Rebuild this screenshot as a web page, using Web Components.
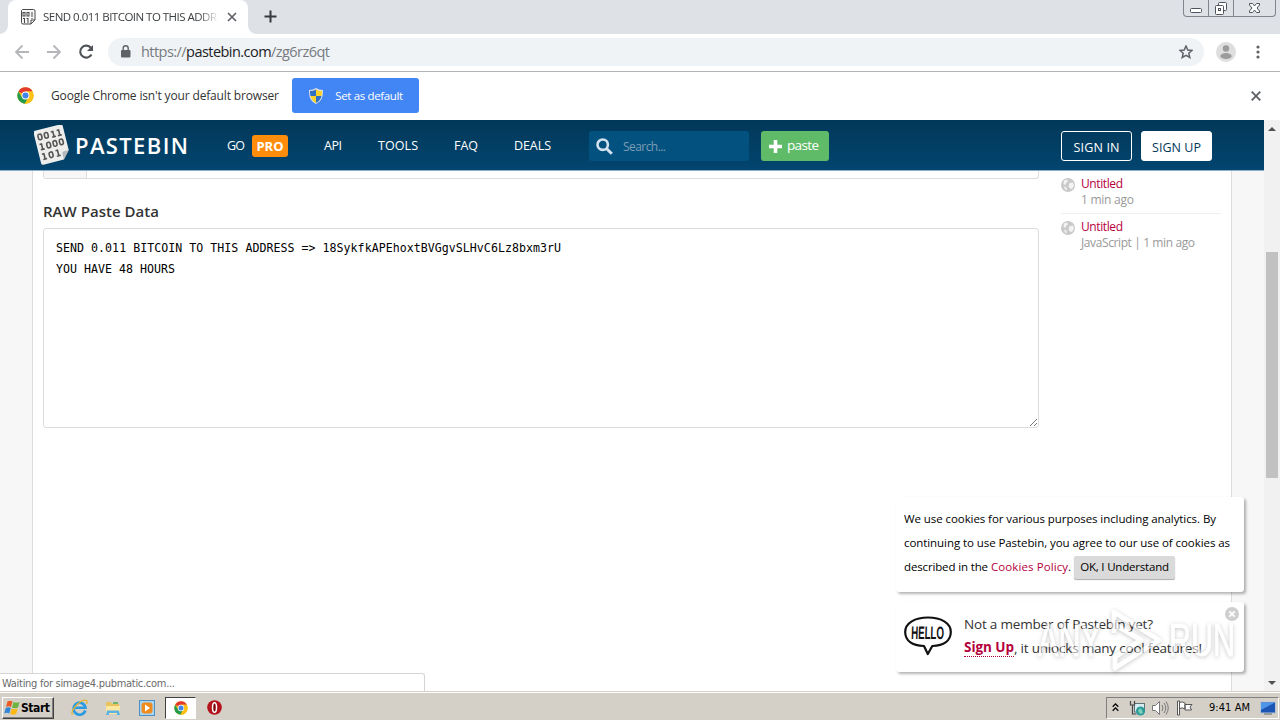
<!DOCTYPE html>
<html lang="en">
<head>
<meta charset="utf-8">
<title>Pastebin</title>
<style>
  body {
    margin: 0;
    width: 1280px;
    height: 720px;
    overflow: hidden;
    display: flex;
    flex-direction: column;
    font-family: "Open Sans", "Noto Sans", sans-serif;
    font-size: 12px;
    color: #333;
    background: #fff;
  }
</style>
</head>
<body>
<browser-tabs><fit-text w="174">SEND 0.011 BITCOIN TO THIS ADDR</fit-text></browser-tabs>
<browser-toolbar></browser-toolbar>
<info-bar><fit-text w="228">Google Chrome isn't your default browser</fit-text></info-bar>
<page-view>
  <site-header slot="header"></site-header>
  <raw-paste slot="main"><div><fit-text w="505">SEND 0.011 BITCOIN TO THIS ADDRESS =&gt; 18SykfkAPEhoxtBVGgvSLHvC6Lz8bxm3rU</fit-text></div><div><fit-text w="119">YOU HAVE 48 HOURS</fit-text></div></raw-paste>
  <recent-paste slot="side"><fit-text w="42" slot="name">Untitled</fit-text><fit-text w="53">1 min ago</fit-text></recent-paste>
  <recent-paste slot="side"><fit-text w="42" slot="name">Untitled</fit-text><fit-text w="114">JavaScript | 1 min ago</fit-text></recent-paste>
</page-view>
<task-bar></task-bar>

<script>
const CHROME_ICON = `
  <svg viewBox="0 0 48 48">
    <circle cx="24" cy="24" r="23" fill="#fbc116"/>
    <path d="M24 24 4 12.6A23 23 0 0 1 44 12.5L24 13z" fill="#e23b2e"/>
    <path d="M4 12.6A23 23 0 0 0 22 47l10-17.500L14 29z" fill="#269b4b"/>
    <path d="M24 13h20A23 23 0 0 1 22 47l11.500-18z" fill="#fbc116"/>
    <circle cx="24" cy="24" r="11" fill="#fff"/>
    <circle cx="24" cy="24" r="8.600" fill="#4285e8"/>
  </svg>`;

class BaseElement extends HTMLElement {
  constructor() {
    super();
    this.attachShadow({ mode: 'open' });
    this.shadowRoot.innerHTML = this.constructor.markup;
  }
}

class BrowserTabs extends BaseElement {
  static markup = `
    <style>
      :host { display: flex; height: 34px; background: #dee1e6; flex: none; }
      .tab {
        box-sizing: border-box;
        width: 240px;
        margin-left: 8px;
        padding: 0 10px 0 12px;
        display: flex;
        align-items: center;
        background: #fff;
        border-radius: 8px 8px 0 0;
        position: relative;
      }
      .tab::before, .tab::after {
        content: "";
        position: absolute;
        bottom: 0;
        width: 8px;
        height: 8px;
      }
      .tab::before { left: -8px; background: radial-gradient(circle at 0 0, transparent 7.5px, #fff 8px); }
      .tab::after { right: -8px; background: radial-gradient(circle at 100% 0, transparent 7.5px, #fff 8px); }
      svg { display: block; flex: none; }
      .title {
        width: 174px;
        margin: -2px 10px 0 7px;
        overflow: hidden;
        font-size: 11.5px;
        color: #3c4043;
        -webkit-mask-image: linear-gradient(90deg, #000 156px, transparent 176px);
      }
      .plus { margin: 10px 0 0 16px; }
      .win {
        box-sizing: border-box;
        display: flex;
        width: 93px;
        height: 17px;
        margin-left: auto;
        margin-right: 4px;
        border: 1px solid #80848c;
        border-top: 0;
        border-radius: 0 0 4px 4px;
      }
    </style>
    <div class="tab">
      <svg width="16" height="16" viewBox="0 0 16 16" fill="none" stroke="#484848">
        <path d="M2.500.5h11q1.500 0 1.500 1.500v9l-4 4H3q-1.500 0-1.500-1.500v-12z" fill="#f6f6f6"/>
        <path d="M11 15v-4h4" />
        <rect x="3" y="3.500" width="2" height="3.500"/><rect x="7" y="3.500" width="2" height="3.500"/>
        <path d="M12 3v5M4.500 9v5M8 9v5M3 9.500h1.500M6.500 9.500H8M11.500 9.500h1" />
      </svg>
      <div class="title"><slot></slot></div>
      <svg width="10" height="10" viewBox="0 0 10 10" stroke="#5f6368" stroke-width="1.700"><path d="M1 1l8 8M9 1 1 9"/></svg>
    </div>
    <svg class="plus" width="13" height="13" viewBox="0 0 13 13" stroke="#36393d" stroke-width="2"><path d="M6.500.5v12M.5 6.500h12"/></svg>
    <div class="win">
      <svg width="92" height="16" viewBox="0 0 92 16" fill="none" stroke="#50555d">
        <path d="M24.500 0v16M49.500 0v16" stroke="#80848c"/>
        <rect x="6.500" y="8.500" width="11" height="4" rx="1" fill="#fff"/>
        <rect x="34.500" y="2.500" width="8" height="8" rx="1" fill="#fff"/>
        <rect x="31.500" y="5.500" width="8" height="9" rx="1" fill="#fff"/>
        <rect x="34.500" y="8.500" width="2" height="2"/>
        <path d="M65.500 3.500h3l2 2.500 2-2.500h3v1.500L73 8l2.500 3v1.500h-3l-2-2.500-2 2.500h-3V11L68 8l-2.500-3z" fill="#fff"/>
      </svg>
    </div>`;
}

class BrowserToolbar extends BaseElement {
  static markup = `
    <style>
      :host {
        box-sizing: border-box;
        display: flex;
        align-items: center;
        height: 38px;
        padding: 0 15px 2px 14px;
        border-bottom: 1px solid #b3b5b7;
        background: #fff;
        flex: none;
      }
      svg { display: block; flex: none; }
      .nav { display: flex; gap: 16px; }
      .omni {
        box-sizing: border-box;
        height: 28px;
        width: 1096px;
        margin: 0 12px 0 13px;
        padding: 0 11px 0 13px;
        display: flex;
        align-items: center;
        border-radius: 14px;
        background: #f0f3f6;
      }
      .url { margin-left: 10px; flex: 1; font-size: 14.5px; color: #777b80; white-space: nowrap; }
      .url b { font-weight: 400; color: #202124; }
      .menu { margin-left: 20px; }
    </style>
    <div class="nav">
      <svg width="16" height="16" viewBox="0 0 16 16" fill="none" stroke="#b4b6b9" stroke-width="1.800"><path d="M15 8H2M8.500 1.500 2 8l6.500 6.500"/></svg>
      <svg width="16" height="16" viewBox="0 0 16 16" fill="none" stroke="#b4b6b9" stroke-width="1.800"><path d="M1 8h13M7.500 1.500 14 8l-6.500 6.500"/></svg>
      <svg width="17" height="16" viewBox="0 0 17 16" fill="none" stroke="#505357" stroke-width="2.100"><path d="M13.500 10.500A6 6 0 1 1 13 4"/><path d="M15 1v6H9z" fill="#505357" stroke="none"/></svg>
    </div>
    <div class="omni">
      <svg width="10" height="13" viewBox="0 0 10 13"><rect y="5" width="9.500" height="7.500" rx="1" fill="#5f6368"/><path d="M2.200 5V3.200a2.500 2.500 0 0 1 5 0V5" fill="none" stroke="#5f6368" stroke-width="1.400"/></svg>
      <span class="url"><fit-text w="189">https://<b>pastebin.com</b>/zg6rz6qt</fit-text></span>
      <svg width="14" height="14" viewBox="0 0 14 14" fill="none" stroke="#5f6368" stroke-width="1.500"><path d="m7 1 1.800 4 4.300.4-3.300 2.900 1 4.200L7 10.300l-3.800 2.200 1-4.200L.9 5.400 5.200 5z"/></svg>
    </div>
    <svg width="20" height="20" viewBox="0 0 20 20"><circle cx="10" cy="10" r="10" fill="#dedede"/><circle cx="10" cy="6.500" r="3.200" fill="#9b9b9b"/><ellipse cx="10" cy="14" rx="5.700" ry="3" fill="#9b9b9b"/></svg>
    <svg class="menu" width="4" height="14" viewBox="0 0 4 14" fill="#5f6368"><circle cx="2" cy="2" r="1.600"/><circle cx="2" cy="7" r="1.600"/><circle cx="2" cy="12" r="1.600"/></svg>`;
}

class InfoBar extends BaseElement {
  static markup = `
    <style>
      :host {
        box-sizing: border-box;
        display: flex;
        align-items: center;
        height: 48px;
        padding: 0 19px 1px 17px;
        background: #fff;
        flex: none;
        font-size: 12px;
      }
      .icon svg { width: 17px; height: 17px; display: block; }
      .msg { margin: 0 13px 0 17px; }
      button {
        display: flex;
        align-items: center;
        width: 127px;
        height: 35px;
        padding: 0 0 0 17px;
        gap: 12px;
        border: 0;
        border-radius: 3px;
        background: #4285f4;
        color: #fff;
        font: 11.5px "Open Sans", sans-serif;
      }
      .close { margin-left: auto; }
    </style>
    <span class="icon">${CHROME_ICON}</span>
    <span class="msg"><slot></slot></span>
    <button>
      <svg width="14" height="16" viewBox="0 0 14 16">
        <path d="M7 0q3 2 7 2c0 7-1 11-7 14C1 13 0 9 0 2q4 0 7-2z" fill="#d9dee4"/>
        <path d="M7 1.500V8H1.500Q1 6 1 3q3.500 0 6-1.500zM7 8h5.500Q11.500 12.500 7 15z" fill="#2f6fc4"/>
        <path d="M7 1.500V8h5.500Q13 6 13 3 9.500 3 7 1.500zM7 8H1.500Q2.500 12.500 7 15z" fill="#fbd22c"/>
      </svg>
      <fit-text w="68">Set as default</fit-text>
    </button>
    <svg class="close" width="10" height="10" viewBox="0 0 10 10" stroke="#5f6368" stroke-width="1.900"><path d="M.7.7l8.600 8.600M9.300.7.7 9.300"/></svg>`;
}

class PageView extends BaseElement {
  static markup = `
    <style>
      :host { display: flex; height: 571px; position: relative; background: #f7f7f7; flex: none; }
      .view { flex: 1; display: flex; flex-direction: column; }
      .content {
        box-sizing: border-box;
        width: 1200px;
        margin-left: 32px;
        flex: 1;
        display: flex;
        background: #fff;
        border: solid #dcdcdc;
        border-width: 0 1px;
      }
      .main { width: 996px; margin-left: 10px; }
      .side { width: 160px; margin-left: 22px; }
      .scroll {
        width: 16px;
        background: #f1f1f1;
        display: flex;
        flex-direction: column;
        align-items: center;
      }
      .scroll i { border: 4px solid transparent; height: 0; }
      .scroll .up { border-top-width: 0; border-bottom-color: #505050; margin-top: 7px; }
      .scroll .down { border-bottom-width: 0; border-top-color: #505050; margin: auto 0 6px; }
      .thumb { width: 12px; height: 226px; margin-top: 121px; background: #c1c1c1; }
      .notices {
        position: absolute;
        left: 896px;
        top: 377px;
        width: 348px;
        display: flex;
        flex-direction: column;
        gap: 10px;
      }
      run-watermark { position: absolute; left: 1038px; top: 485px; }
      status-bubble { position: absolute; left: 0; bottom: 0; }
    </style>
    <div class="view">
      <slot name="header"></slot>
      <div class="content">
        <div class="main"><slot name="main"></slot></div>
        <div class="side"><slot name="side"></slot></div>
      </div>
    </div>
    <div class="scroll"><i class="up"></i><div class="thumb"></div><i class="down"></i></div>
    <div class="notices">
      <cookie-notice></cookie-notice>
      <member-notice></member-notice>
    </div>
    <run-watermark></run-watermark>
    <status-bubble><fit-text w="173">Waiting for simage4.pubmatic.com...</fit-text></status-bubble>`;
}

class SiteHeader extends BaseElement {
  static markup = `
    <style>
      :host {
        box-sizing: border-box;
        display: flex;
        align-items: center;
        height: 51px;
        padding: 2px 52px 0 34px;
        background: linear-gradient(#023859, #02456f);
        border-bottom: 1px solid #8db0c6;
        color: #fff;
        font-size: 12.5px;
        flex: none;
      }
      svg { display: block; flex: none; }
      .logo { margin-top: -3px; }
      .brand { margin: -2px 39px 0 5px; font-size: 22px; font-weight: 600; line-height: 30px; }
      .go { margin-top: -2px; }
      .pro {
        display: flex;
        align-items: center;
        justify-content: center;
        width: 36px;
        height: 22px;
        margin: 0 36px 0 7px;
        border-radius: 3px;
        background: #ff8c0a;
        font-weight: 700;
        font-size: 13px;
      }
      nav { display: flex; gap: 36px; margin: -2px 38px 0 0; }
      .search {
        display: flex;
        align-items: center;
        box-sizing: border-box;
        width: 160px;
        height: 30px;
        padding-left: 7px;
        gap: 10px;
        border-radius: 3px;
        background: #02517f;
        color: #7c9db3;
        font-size: 12px;
      }
      .paste {
        display: flex;
        align-items: center;
        box-sizing: border-box;
        width: 68px;
        height: 30px;
        margin: 0 auto 0 12px;
        padding-left: 8px;
        gap: 5px;
        border-radius: 3px;
        background: #5fbb68;
        font-size: 13.5px;
      }
      .paste fit-text { margin-top: -2px; }
      .btn {
        display: flex;
        align-items: center;
        justify-content: center;
        box-sizing: border-box;
        width: 71px;
        height: 30px;
        padding-top: 2px;
        border: 1px solid #fff;
        border-radius: 3px;
      }
      .fill { margin-left: 9px; background: #fff; color: #023859; }
    </style>
    <svg class="logo" width="36" height="40" viewBox="0 0 36 40">
      <g transform="rotate(-14 18 20)">
        <path d="M5 2h26q2 0 2 2v25l-7 8H5q-2 0-2-2V4q0-2 2-2z" fill="#eeeeec"/>
        <path d="M26 37v-6q0-2 2-2h5z" fill="#b5b9bb"/>
        <g fill="none" stroke="#555" stroke-width="1.600">
          <rect x="6.500" y="6.500" width="3.600" height="5.500" rx="1.500"/><rect x="13" y="6.500" width="3.600" height="5.500" rx="1.500"/>
          <path d="M20 7h2v5.500m-2 0h4M26 7h2v5.500m-2 0h4M6 16.500h2V22m-2 0h4"/>
          <rect x="13" y="16.500" width="3.600" height="5.500" rx="1.500"/><rect x="19.500" y="16.500" width="3.600" height="5.500" rx="1.500"/><rect x="26" y="16.500" width="3.600" height="5.500" rx="1.500"/>
          <path d="M6 26.500h2V32m-2 0h4M20 26.500h2V32m-2 0h4"/><rect x="13" y="26.500" width="3.600" height="5.500" rx="1.500"/>
        </g>
      </g>
    </svg>
    <span class="brand"><fit-text w="113">PASTEBIN</fit-text></span>
    <fit-text class="go" w="18">GO</fit-text>
    <span class="pro"><fit-text w="27">PRO</fit-text></span>
    <nav>
      <fit-text w="18">API</fit-text>
      <fit-text w="40">TOOLS</fit-text>
      <fit-text w="24">FAQ</fit-text>
      <fit-text w="37">DEALS</fit-text>
    </nav>
    <div class="search">
      <svg width="17" height="17" viewBox="0 0 17 17" fill="none" stroke="#d3e2ee" stroke-width="2.600"><circle cx="6.700" cy="6.700" r="5.200"/><path d="m10.500 10.500 5.300 5.300" stroke-width="3"/></svg>
      <fit-text w="43">Search...</fit-text>
    </div>
    <div class="paste">
      <svg width="13" height="13" viewBox="0 0 13 13" fill="#fff"><path d="M4.700 0h3.600v4.700H13v3.600H8.300V13H4.700V8.300H0V4.700h4.700z"/></svg>
      <fit-text w="32">paste</fit-text>
    </div>
    <div class="btn"><fit-text w="46">SIGN IN</fit-text></div>
    <div class="btn fill"><fit-text w="49">SIGN UP</fit-text></div>`;
}

class RawPaste extends BaseElement {
  static markup = `
    <style>
      :host { display: block; }
      .code {
        box-sizing: border-box;
        height: 8px;
        border: 1px solid #ddd;
        border-top: 0;
        border-radius: 0 0 3px 3px;
      }
      .lines { width: 42px; height: 7px; background: #f7f7f7; border-right: 1px solid #ddd; }
      h2 { margin: 22px 0 6px; font-size: 15px; line-height: 21px; font-weight: 600; color: #333; }
      .area {
        box-sizing: border-box;
        height: 200px;
        padding: 9px 12px;
        border: 1px solid #dcdcdc;
        border-radius: 3px;
        font: 11.6px/21px "DejaVu Sans Mono", monospace;
        color: #000;
        position: relative;
      }
      svg { position: absolute; right: 0; bottom: 0; }
    </style>
    <div class="code"><div class="lines"></div></div>
    <h2><fit-text w="116">RAW Paste Data</fit-text></h2>
    <div class="area">
      <slot></slot>
      <svg width="10" height="10" viewBox="0 0 10 10" stroke="#777"><path d="M2 9 9 2M6 9l3-3"/></svg>
    </div>`;
}

class RecentPaste extends BaseElement {
  static markup = `
    <style>
      :host {
        box-sizing: border-box;
        display: flex;
        height: 43px;
        padding-top: 5px;
        gap: 6px;
        border-bottom: 1px solid #eee;
        font-size: 12px;
        line-height: 16px;
        color: #999;
      }
      :host(:last-child) { border-bottom: 0; }
      svg { display: block; margin-top: 2px; flex: none; }
      .name { color: #b5003c; }
    </style>
    <svg width="14" height="14" viewBox="0 0 14 14"><circle cx="7" cy="7" r="7" fill="#c9c9c9"/><path d="M3 2.500 6 1.500l1 2-2 1.500-.5 2-2-1zM8.500 5 12 4.500l1 3-2 3.500-2-.5-1.500-2zM3 8.500l2.500 1L6 12l-2-.5z" fill="#f3f3f3"/></svg>
    <div><div class="name"><slot name="name"></slot></div><div><slot></slot></div></div>`;
}

class CookieNotice extends BaseElement {
  static markup = `
    <style>
      :host {
        box-sizing: border-box;
        display: block;
        height: 95px;
        padding: 10px 7px 10px 8px;
        border-radius: 3px;
        background: #fff;
        box-shadow: 2px 2px 3px rgba(0,0,0,.3);
        font-size: 11.5px;
        line-height: 24px;
        color: #000;
      }
      .row { display: flex; align-items: center; height: 24px; }
      a { color: #b5003c; margin-left: 3px; }
      button {
        width: 101px;
        height: 23px;
        margin: 0 0 0 3px;
        padding: 0 0 1px;
        border: 0;
        border-radius: 2px;
        background: #dadada;
        box-shadow: 0 1px 1px #aaa;
        font: 11.5px "Open Sans", sans-serif;
      }
    </style>
    <div class="row"><fit-text w="312">We use cookies for various purposes including analytics. By</fit-text></div>
    <div class="row"><fit-text w="326">continuing to use Pastebin, you agree to our use of cookies as</fit-text></div>
    <div class="row"><fit-text w="84">described in the</fit-text><a><fit-text w="77">Cookies Policy</fit-text></a>. <button><fit-text w="89">OK, I Understand</fit-text></button></div>`;
}

class MemberNotice extends BaseElement {
  static markup = `
    <style>
      :host {
        box-sizing: border-box;
        display: flex;
        height: 70px;
        padding: 10px 7px 10px 8px;
        gap: 12px;
        border-radius: 3px;
        background: #fff;
        box-shadow: 2px 2px 3px rgba(0,0,0,.3);
        font-size: 13.5px;
        line-height: 24px;
        color: #333;
        position: relative;
      }
      svg { display: block; flex: none; }
      .bubble { position: relative; width: 48px; margin-top: 4px; }
      .bubble span {
        position: absolute;
        left: 7px;
        top: 7px;
        font: italic 700 18px/21px "Liberation Sans", sans-serif;
        color: #111;
        transform: scaleX(.54) skewX(8deg);
        transform-origin: 0 50%;
      }
      .row { display: flex; }
      b { color: #b5003c; border-bottom: 1px dotted #b5003c; line-height: 17px; height: 17px; margin-top: 3px; }
      .close { position: absolute; right: 5px; top: 5px; }
    </style>
    <div class="bubble">
      <svg width="48" height="40" viewBox="0 0 48 40">
        <path d="M20 30C8 29.500 1.200 24.500 1.200 16 1.200 7 11 1.500 24 1.500S46.800 7 46.800 16c0 8.500-7 13.500-18.500 14l-4.500 8z" fill="#fff" stroke="#111" stroke-width="2.200" stroke-linejoin="round"/>
      </svg>
      <span>HELLO</span>
    </div>
    <div>
      <div class="row"><fit-text w="189">Not a member of Pastebin yet?</fit-text></div>
      <div class="row"><b><fit-text w="50">Sign Up</fit-text></b><fit-text w="188">, it unlocks many cool features!</fit-text></div>
    </div>
    <svg class="close" width="14" height="14" viewBox="0 0 14 14"><circle cx="7" cy="7" r="7" fill="#cfcfcf"/><path d="m4.300 4.300 5.400 5.400m0-5.400L4.300 9.700" stroke="#fff" stroke-width="1.800"/></svg>`;
}

class RunWatermark extends BaseElement {
  static markup = `
    <style>
      :host {
        display: flex;
        align-items: center;
        width: 200px;
        height: 70px;
        filter: drop-shadow(0 1px 2px rgba(0,0,0,.4));
        opacity: .55;
        color: #fff;
        font: 400 47px/70px "Liberation Sans", sans-serif;
        -webkit-text-stroke: 1px #fff;
      }
      .word { width: 64px; white-space: nowrap; }
      .word span { display: inline-block; transform-origin: 0 50%; transform: scaleX(.65); }
      svg { display: block; flex: none; margin: 0 4px 0 7px; }
    </style>
    <div class="word"><span>ANY</span></div>
    <svg width="56" height="66" viewBox="0 0 56 66" fill="none" stroke="#fff" stroke-width="5" stroke-linejoin="round">
      <path d="M5 26V5l45 28L6 61V50l26-17L5 17"/>
      <path d="M6 50l26-17"/>
    </svg>
    <div class="word"><span>RUN</span></div>`;
}

class StatusBubble extends BaseElement {
  static markup = `
    <style>
      :host {
        box-sizing: border-box;
        display: block;
        width: 425px;
        height: 18px;
        padding-left: 2px;
        border: 1px solid #d5d5d5;
        border-width: 1px 1px 0 0;
        border-radius: 0 3px 0 0;
        background: #fff;
        font: 11px/19px "DejaVu Sans Condensed", "DejaVu Sans", sans-serif;
        color: #6a6a6a;
      }
    </style>
    <slot></slot>`;
}

class TaskBar extends BaseElement {
  static markup = `
    <style>
      :host {
        box-sizing: border-box;
        display: flex;
        align-items: center;
        height: 29px;
        padding: 3px 0 0 2px;
        border-top: 1px solid #d4d0c8;
        box-shadow: inset 0 1px #fff;
        background: #d4d0c8;
        font: 11px "DejaVu Sans Condensed", "DejaVu Sans", sans-serif;
        color: #000;
        flex: none;
      }
      svg { display: block; flex: none; }
      .start {
        display: flex;
        align-items: center;
        box-sizing: border-box;
        width: 52px;
        height: 22px;
        padding-left: 1px;
        border: 1px solid;
        border-color: #fff #404040 #404040 #fff;
        box-shadow: inset -1px -1px #808080;
        font-weight: 700;
        font-size: 12px;
      }
      .apps { display: flex; align-items: center; margin-left: 17px; }
      .active {
        display: flex;
        align-items: center;
        justify-content: center;
        box-sizing: border-box;
        width: 31px;
        height: 22px;
        margin: 0 11px 0 10px;
        border: 1px solid;
        border-color: #404040 #fff #fff #404040;
        background: #fff;
      }
      .active svg { width: 14px; height: 14px; }
      .tray {
        display: flex;
        align-items: center;
        box-sizing: border-box;
        width: 173px;
        height: 22px;
        margin-left: auto;
        margin-right: 1px;
        padding-left: 5px;
        border: 1px solid;
        border-color: #808080 #fff #fff #808080;
      }
    </style>
    <div class="start">
      <svg width="17" height="17" viewBox="0 0 17 17">
        <path d="M3.500 2.500Q6 1 8.500 2.500L7 8Q4.500 6.500 2 8z" fill="#e95b23"/>
        <path d="M9.500 3q3 1.500 6 0L14 8.500q-3 1.500-6 0z" fill="#6cb33f"/>
        <path d="M1.700 9Q4.500 7.500 6.800 9l-1.500 5.500Q3 13 .3 14.500z" fill="#2f86d8"/>
        <path d="M7.700 9.500q3 1.500 6 0L12.200 15q-3 1.500-6 0z" fill="#fcb913"/>
      </svg>
      <fit-text w="29">Start</fit-text>
    </div>
    <div class="apps">
      <svg width="17" height="17" viewBox="0 0 17 17" fill="none">
        <path d="M14.300 11.500A6 6 0 1 1 14.500 8.700H4" stroke="#2a9be0" stroke-width="2.600"/>
        <path d="M1.500 15.500C-1 12 10-1 15.500 1.500c1 1 .5 2.500 0 3.500" stroke="#e5b32e" stroke-width="1.300"/>
      </svg>
      <svg style="margin-left:17px" width="16" height="16" viewBox="0 0 16 16">
        <path d="M1 2h5l1 2h7v10H1z" fill="#e9c45c"/><path d="M1 6h14v8H1z" fill="#fbe7a0"/>
        <path d="M2 10.500h12l1 4.500h-3v-2H4v2H1z" fill="#5fb3e4"/><path d="M8 2h5v2H8z" fill="#6fb36a"/>
      </svg>
      <svg style="margin-left:18px" width="16" height="16" viewBox="0 0 16 16">
        <rect x=".5" y=".5" width="15" height="15" fill="#a9d4f2" stroke="#4f90c4"/><rect x="2.500" y="2.500" width="11" height="11" rx="3" fill="#f08b1d"/><path d="m6 4.500 5 3.500-5 3.500z" fill="#fff"/>
      </svg>
      <span class="active">${CHROME_ICON}</span>
      <svg width="15" height="15" viewBox="0 0 15 15"><circle cx="7.500" cy="7.500" r="7.300" fill="#b5131b"/><ellipse cx="7.500" cy="7.500" rx="2" ry="4.800" fill="#7d070d" stroke="#fff" stroke-width="1.500"/></svg>
    </div>
    <div class="tray">
      <svg width="7" height="9" viewBox="0 0 7 9" fill="none" stroke="#000" stroke-width="1.300"><path d="m.7 3.700 2.800-2.800 2.800 2.800M.7 7.700l2.800-2.800 2.800 2.800"/></svg>
      <svg style="margin-left:10px" width="17" height="16" viewBox="0 0 17 16">
        <rect x="5.500" y="3.500" width="10" height="8.500" fill="#d8edf2" stroke="#5d7377"/>
        <path d="M1.500 1v4h4V1M3.500 5v9h4" fill="none" stroke="#444" stroke-width="1.200"/>
        <circle cx="11.500" cy="11" r="4.500" fill="#2a9d9a"/><path d="m9 11 2-3 2 2 1 3-3 1z" fill="#7ed0b8"/>
      </svg>
      <svg style="margin-left:6px" width="17" height="16" viewBox="0 0 17 16" fill="none" stroke="#777">
        <path d="M.5 5.500h3l4-4v13l-4-4h-3z" fill="#fff"/><path d="M10 5q2 3 0 6M12 3q3.500 5 0 10M14 1.500q4.500 6.500 0 13"/>
      </svg>
      <svg style="margin-left:8px" width="16" height="16" viewBox="0 0 16 16" fill="#fff" stroke="#555">
        <path d="M.5 1h2v14h-2zM2.500 2.500Q5 1 8 3v6Q5 7 2.500 8.500zM8 4.500h7l-2 2.500 1.500 3H8z"/>
      </svg>
      <fit-text style="margin-left:16px" w="41">9:41 AM</fit-text>
      <svg style="margin-left:10px" width="16" height="14" viewBox="0 0 16 14"><rect x=".5" y="1" width="15" height="11" fill="#1c55b4" stroke="#b8c6d8"/><path d="M1 1.500h14L1 9z" fill="#4e94e8"/><path d="M4 13h8" stroke="#666"/></svg>
    </div>`;
}

// One line of text, tracked in or out until it is exactly `w` pixels wide.
class FitText extends BaseElement {
  static markup = `
    <style>
      :host { display: inline-block; white-space: nowrap; }
      span { display: inline-block; }
    </style>
    <span><slot></slot></span>`;

  connectedCallback() {
    const span = this.shadowRoot.querySelector('span');
    const width = Number(this.getAttribute('w'));
    const count = this.textContent.length;
    const natural = span.getBoundingClientRect().width;
    span.style.letterSpacing = `${(width - natural) / (count - 1)}px`;
    this.style.width = `${width}px`;
  }
}

customElements.define('browser-tabs', BrowserTabs);
customElements.define('browser-toolbar', BrowserToolbar);
customElements.define('info-bar', InfoBar);
customElements.define('page-view', PageView);
customElements.define('site-header', SiteHeader);
customElements.define('raw-paste', RawPaste);
customElements.define('recent-paste', RecentPaste);
customElements.define('cookie-notice', CookieNotice);
customElements.define('member-notice', MemberNotice);
customElements.define('run-watermark', RunWatermark);
customElements.define('status-bubble', StatusBubble);
customElements.define('task-bar', TaskBar);
customElements.define('fit-text', FitText);
</script>
</body>
</html>
